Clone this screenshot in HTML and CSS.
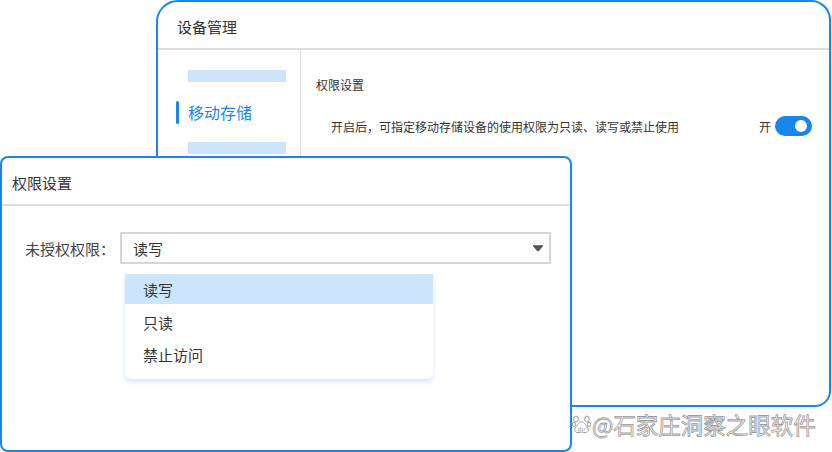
FILE: index.html
```html
<!DOCTYPE html>
<html lang="zh-CN">

<head>
    <meta charset="UTF-8" />
    <meta name="viewport" content="width=device-width, initial-scale=1.0" />
    <title>设备管理</title>
    <link rel="stylesheet" href="styles.css">
</head>

<body>
    <div class="desk">
        <!-- back window -->
        <div class="win win-back">
            <div class="win-head">设备管理</div>
            <div class="win-main">
                <div class="side">
                    <div class="side-bar"></div>
                    <div class="side-item active"><span class="mark"></span>移动存储</div>
                    <div class="side-bar"></div>
                </div>
                <div class="content">
                    <div class="sec-title">权限设置</div>
                    <div class="sec-row">
                        <span class="desc">开启后，可指定移动存储设备的使用权限为只读、读写或禁止使用</span>
                        <span class="switch-wrap">开<span class="switch"><span class="knob"></span></span></span>
                    </div>
                </div>
            </div>
        </div>

        <!-- front dialog -->
        <div class="win win-front">
            <div class="win-head">权限设置</div>
            <div class="form">
                <div class="form-row">
                    <label class="form-label">未授权权限：</label>
                    <div class="select">
                        <span>读写</span>
                        <svg class="caret" width="12" height="8" viewBox="0 0 12 8">
                            <path d="M1.5 1.8 H10.5 L6.6 6.3 Q6 7 5.4 6.3 Z" fill="#555" stroke="#555" stroke-width="1.2" stroke-linejoin="round" />
                        </svg>
                    </div>
                </div>
                <ul class="menu">
                    <li class="on">读写</li>
                    <li>只读</li>
                    <li>禁止访问</li>
                </ul>
            </div>
        </div>

        <div class="mark-wm">
            <svg width="19" height="20" viewBox="0 0 19 20">
                <g fill="#fff" stroke="#9a9a9a" stroke-width="1">
                    <ellipse cx="4" cy="5" rx="2.3" ry="3" />
                    <ellipse cx="15" cy="5" rx="2.3" ry="3" />
                    <ellipse cx="1.9" cy="10.5" rx="1.6" ry="2.2" />
                    <ellipse cx="17.1" cy="10.5" rx="1.6" ry="2.2" />
                    <path d="M9.5 8 C6.5 8 4.5 12 3.2 14 C1.8 16.5 3.5 19 6 18.6 C7.5 18.4 8.5 18 9.5 18 C10.5 18 11.5 18.4 13 18.6 C15.5 19 17.2 16.5 15.8 14 C14.5 12 12.5 8 9.5 8 Z" />
                </g>
                <text x="9.5" y="16.8" font-size="5.5" text-anchor="middle" fill="#9a9a9a" font-family="DejaVu Sans, sans-serif">du</text>
            </svg>
            <span>@石家庄洞察之眼软件</span>
        </div>
    </div>
</body>

</html>
```

FILE: styles.css
```css
* {
    margin: 0;
    padding: 0;
    box-sizing: border-box;
    --blue: #1787ef;
    --blue-light: #cde5fb;
    --line: #dcdcdc;
    --txt: #333333;
}

body {
    background-color: #ffffff;
    color: var(--txt);
    font-family: "Noto Sans CJK SC", "Noto Sans", sans-serif;
}

.desk {
    position: relative;
    width: 832px;
    height: 452px;
    overflow: hidden;
}

.win {
    position: absolute;
    background-color: #ffffff;
    border: 2px solid var(--blue);
    display: flex;
    flex-direction: column;
}

.win-back {
    left: 156px;
    top: 0;
    width: 675px;
    height: 407px;
    border-radius: 22px 20px 16px 6px;
}

.win-front {
    left: 0;
    top: 156px;
    width: 572px;
    height: 296px;
    border-radius: 8px;
}

.win-head {
    height: 48px;
    flex-shrink: 0;
    display: flex;
    align-items: center;
    padding-left: 19px;
    padding-top: 2px;
    font-size: 15px;
    border-bottom: 2px solid var(--line);
}

.win-front .win-head {
    padding-left: 10px;
}

.win-main {
    flex: 1;
    display: flex;
}

.side {
    width: 143px;
    border-right: 1px solid var(--line);
    display: flex;
    flex-direction: column;
    gap: 18px;
    padding: 20px 0 0 18px;
}

.side-bar {
    margin-left: 12px;
    width: 98px;
    height: 12px;
    background-color: var(--blue-light);
}

.side-item {
    display: flex;
    align-items: center;
    gap: 9px;
    height: 24px;
    font-size: 16px;
    color: var(--blue);
}

.side-item .mark {
    width: 3px;
    height: 23px;
    border-radius: 2px;
    background-color: var(--blue);
}

.content {
    flex: 1;
    padding: 26px 17px 0 15px;
}

.sec-title {
    font-size: 12px;
    line-height: 18px;
}

.sec-row {
    margin-top: 22px;
    padding-left: 15px;
    display: flex;
    justify-content: space-between;
    align-items: center;
    font-size: 12px;
}

.switch-wrap {
    display: flex;
    align-items: center;
    gap: 4px;
}

.switch {
    width: 37px;
    height: 20px;
    border-radius: 10px;
    background-color: var(--blue);
    display: flex;
    justify-content: flex-end;
    align-items: center;
    padding-right: 5px;
}

.knob {
    width: 12px;
    height: 12px;
    border-radius: 50%;
    background-color: #ffffff;
}

.form {
    padding: 26px 19px 0 23px;
}

.form-row {
    display: flex;
    align-items: center;
    gap: 5px;
    font-size: 15px;
}

.form-label {
    color: #444444;
}

.select {
    flex: 1;
    height: 32px;
    border: 2px solid #d6d6d6;
    display: flex;
    align-items: center;
    justify-content: space-between;
    padding: 0 5px 0 11px;
}

.menu {
    list-style: none;
    margin: 10px 0 0 100px;
    width: 308px;
    padding-bottom: 9px;
    border-radius: 0 0 6px 6px;
    background-color: #ffffff;
    box-shadow: 0 3px 5px rgba(40, 130, 230, 0.2);
    font-size: 15px;
}

.menu li {
    height: 31px;
    display: flex;
    align-items: center;
    padding-left: 18px;
}

.menu li + li {
    height: 32px;
}

.menu li.on {
    height: 30px;
    margin-bottom: 2px;
    background-color: var(--blue-light);
}

.mark-wm {
    position: absolute;
    left: 572px;
    top: 408px;
    display: flex;
    align-items: center;
    gap: 1px;
    font-size: 22.5px;
    color: #ffffff;
    -webkit-text-stroke: 0.8px #9a9a9a;
    font-family: "Noto Sans CJK SC", sans-serif;
}
```
